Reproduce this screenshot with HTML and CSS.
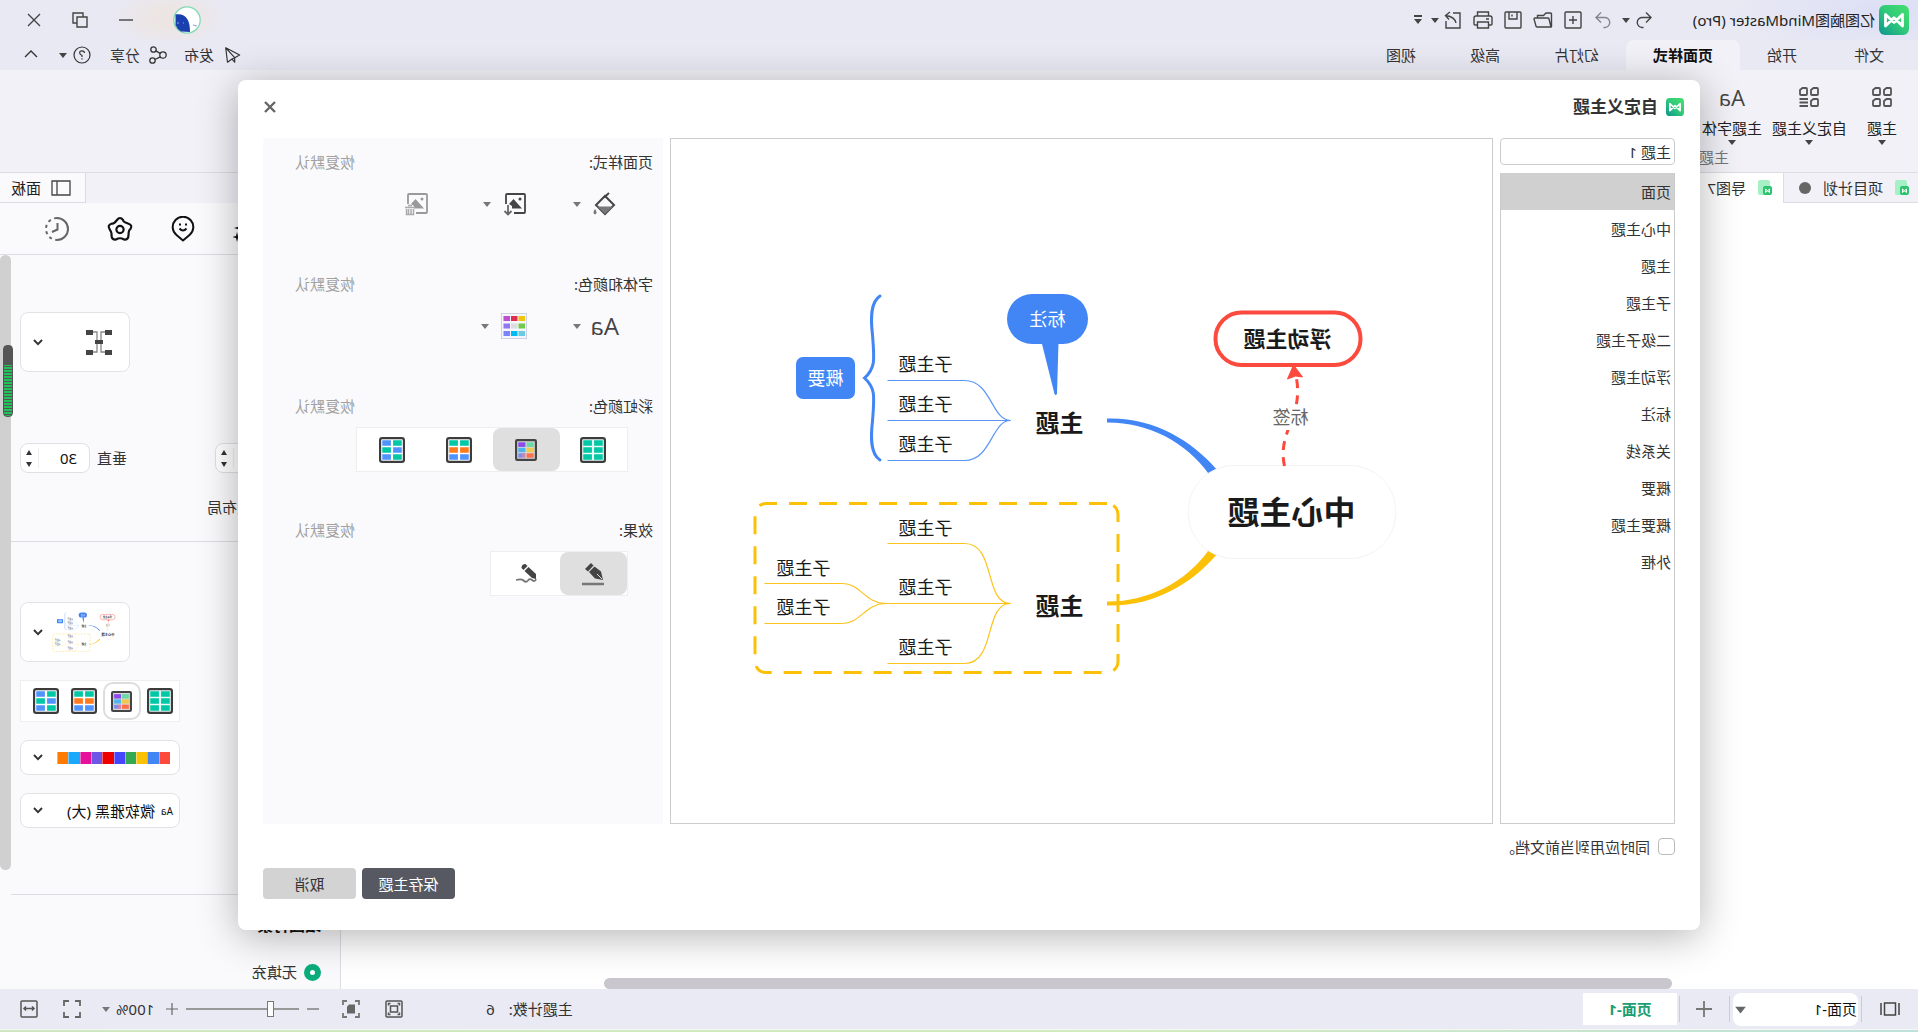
FILE: index.html
```html
<!DOCTYPE html>
<html lang="zh-CN">
<head>
<meta charset="utf-8">
<title>亿图脑图MindMaster (Pro)</title>
<link rel="stylesheet" href="styles.css">
</head>
<body>
<svg class="sprite" aria-hidden="true">
  <defs>
    <linearGradient id="logo-fill" x1="1" y1="0" x2="0" y2="1"><stop offset="0" stop-color="#46e070"/><stop offset=".5" stop-color="#2fc97a"/><stop offset="1" stop-color="#0d9490"/></linearGradient>
  </defs>
  <symbol id="logo" viewBox="0 0 30 30"><rect width="30" height="30" rx="6" fill="url(#logo-fill)" transform="matrix(-1 0 0 1 30 0)"/><path d="M6.500 21V9.500L15 17.500L23.500 9.500V21L15 12.800Z" fill="none" stroke="#fff" stroke-width="2.800" stroke-linejoin="round"/></symbol>
  <symbol id="doc" viewBox="0 0 14 16"><path d="M4 0H12a2 2 0 0 1 2 2V13a2 2 0 0 1-2 2H4a2 2 0 0 1-2-2V2A2 2 0 0 1 4 0Z" fill="#a5f0c4"/><rect x="0" y="6" width="9" height="9" rx="2" fill="#2cc36f"/><path d="M2.500 12.500V9L4.500 10.800L6.500 9V12.500L4.500 10.800Z" fill="none" stroke="#fff"/></symbol>
  <symbol id="caret" viewBox="0 0 8 5"><path d="M0 0H8L4 5Z" fill="currentColor"/></symbol>
  <symbol id="chev" viewBox="0 0 10 7"><path d="M1 1L5 5.200L9 1" fill="none" stroke="currentColor" stroke-width="1.900"/></symbol>
  <symbol id="grid-one" viewBox="0 0 24 24"><rect x="1" y="1" width="22" height="22" rx="2" fill="#eafaf6" stroke="#3c3c3c" stroke-width="2"/><path d="M3 3h8v5H3zM13 3h8v5h-8zM3 9.500h8v5H3zM13 9.500h8v5h-8zM3 16h8v5H3zM13 16h8v5h-8z" fill="#00c7a5"/></symbol>
  <symbol id="grid-rows" viewBox="0 0 24 24"><rect x="1" y="1" width="22" height="22" rx="2" fill="#fff" stroke="#3c3c3c" stroke-width="2"/><path d="M3 3h8v5H3zM13 3h8v5h-8z" fill="#00c7a5"/><path d="M3 9.500h8v5H3zM13 9.500h8v5h-8z" fill="#ff7a1c"/><path d="M3 16h8v5H3zM13 16h8v5h-8z" fill="#4f93ff"/></symbol>
  <symbol id="grid-mix" viewBox="0 0 24 24"><rect x="1" y="1" width="22" height="22" rx="2" fill="#fff" stroke="#3c3c3c" stroke-width="2"/><path d="M3 3h8v5H3zM13 9.500h8v5h-8zM3 16h8v5H3z" fill="#00c7a5"/><path d="M13 3h8v5h-8zM3 9.500h8v5H3zM13 16h8v5h-8z" fill="#4f93ff"/></symbol>
  <symbol id="grid-rainbow" viewBox="0 0 20 20"><rect x="1" y="1" width="18" height="18" rx="1" fill="#d8d8d8" stroke="#444" stroke-width="2"/><path d="M3 3h6.500v4.200H3z" fill="#6bd9a4"/><path d="M10.500 3H17v4.200h-6.500z" fill="#8b4bee"/><path d="M3 8h6.500v4H3z" fill="#efc94c"/><path d="M10.500 8H17v4h-6.500z" fill="#4db4ee"/><path d="M3 13h6.500v4H3z" fill="#ff7048"/><path d="M10.500 13H17v4h-3.500z" fill="#7a8df2"/><path d="M10.500 13h3v4h-3z" fill="#c987b0"/></symbol>
  <symbol id="bucket" viewBox="0 0 24 24"><path d="M3 13L12 4L21 13L12 22Z" fill="none" stroke="#444" stroke-width="2"/><path d="M4 14.500H20L12 22Z" fill="#777"/><path d="M8 1L13 5.500" stroke="#444" stroke-width="2"/><path d="M22 17q3 4 0 5.500q-3-1.500 0-5.500" fill="#777"/></symbol>
  <symbol id="image" viewBox="0 0 24 24"><path d="M13 21H3a1 1 0 0 1-1-1V3a1 1 0 0 1 1-1H20a1 1 0 0 1 1 1V12" fill="none" stroke="currentColor" stroke-width="1.800"/><path d="M5 16.500L13.500 7L18 12L15 14V16.500Z" fill="currentColor"/><circle cx="7" cy="7" r="1.500" fill="currentColor"/></symbol>
  <symbol id="plane" viewBox="0 0 20 20"><path d="M17 2L1.500 10L7 13L17 2L15 18L10 14.500L7 13V18L10 14.500" fill="none" stroke="currentColor" stroke-width="1.300" stroke-linejoin="round"/></symbol>
</svg>

<div class="app">
  <header class="titlebar">
    <svg class="logo" viewBox="0 0 30 30"><use href="#logo"/></svg>
    <span class="app-name">亿图脑图MindMaster (Pro)</span>
    <div class="quick">
      <button aria-label="重做"><svg width="20" height="20" viewBox="0 0 20 20"><path d="M8 2.500L3 7.500L8 12.500M3 7.500H11.500A5 5 0 0 1 12 17.500H10.500"/></svg></button>
      <svg class="dd" viewBox="0 0 8 5"><use href="#caret"/></svg>
      <button class="dim" aria-label="撤消"><svg width="20" height="20" viewBox="0 0 20 20"><path d="M12 2.500L17 7.500L12 12.500M17 7.500H8.500A5 5 0 0 0 8 17.500H9.500"/></svg></button>
      <button aria-label="新建"><svg width="20" height="20" viewBox="0 0 20 20"><rect x="2" y="2" width="16" height="16" rx="1"/><path d="M10 6V14M6 10H14"/></svg></button>
      <button aria-label="打开"><svg width="20" height="20" viewBox="0 0 20 20"><path d="M1.500 17V4a1 1 0 0 1 1-1H7L9.500 5.500H15.500V8M2 17L4 9a1 1 0 0 1 1-1H18a1 1 0 0 1 1 1L17 16a1 1 0 0 1-1 1Z"/></svg></button>
      <button aria-label="保存"><svg width="20" height="20" viewBox="0 0 20 20"><path d="M3 2H17a1 1 0 0 1 1 1V17a1 1 0 0 1-1 1H3a1 1 0 0 1-1-1V3a1 1 0 0 1 1-1ZM6 2V9H14V2M11 4.500V6.500"/></svg></button>
      <button aria-label="打印"><svg width="20" height="20" viewBox="0 0 20 20"><path d="M4.500 6V2H15.500V6M4.500 15H2a1 1 0 0 1-1-1V8a2 2 0 0 1 2-2H17a2 2 0 0 1 2 2V14a1 1 0 0 1-1 1H15.500M4.500 12H15.500V18H4.500ZM4 9H7"/></svg></button>
      <button aria-label="导出"><svg width="20" height="20" viewBox="0 0 20 20"><path d="M10 3H3V18H17V11M7 13Q8 7 17 5.500M13 2L17.500 5.500L14 9.500"/></svg></button>
      <svg class="dd" viewBox="0 0 8 5"><use href="#caret"/></svg>
      <svg class="more" width="8" height="10" viewBox="0 0 8 10"><path d="M0 0H8V2H0ZM0 4H8L4 9Z" fill="#444"/></svg>
    </div>
    <div class="window-tools">
      <svg class="avatar" viewBox="0 0 28 28"><circle cx="14" cy="14" r="13.200" fill="#fff" stroke="#7fd9b4" stroke-width="1.300"/><path d="M11 26C11 14 15 7 25.500 8.500V19A13 13 0 0 1 20 25.500Z" fill="#1a3fae"/><path d="M17 17h1M22 17h2M4 20l4-1" stroke="#8fa6e8" stroke-width="1.200"/></svg>
      <button aria-label="最小化"><svg width="16" height="16" viewBox="0 0 16 16"><path d="M1 8H15"/></svg></button>
      <button aria-label="还原"><svg width="16" height="16" viewBox="0 0 16 16"><path d="M1 5H11V15H1ZM5 5V1H15V11H11"/></svg></button>
      <button aria-label="关闭窗口"><svg width="16" height="16" viewBox="0 0 16 16"><path d="M2 2L14 14M14 2L2 14"/></svg></button>
    </div>
  </header>

  <nav class="menubar">
    <button>文件</button><button>开始</button><button class="on">页面样式</button><button>幻灯片</button><button>高级</button><button>视图</button>
    <div class="menu-right">
      <button><svg width="18" height="18" viewBox="0 0 20 20"><use href="#plane"/></svg>发布</button>
      <button><svg width="18" height="18" viewBox="0 0 18 18" fill="none" stroke="currentColor" stroke-width="1.300"><circle cx="4" cy="9" r="3.200"/><circle cx="13.500" cy="3.500" r="2.700"/><circle cx="14.500" cy="14.500" r="2.700"/><path d="M6.800 7.400L11.200 4.900M6.600 10.800L12.200 13.500"/></svg>分享</button>
      <button class="help" aria-label="帮助"><svg width="18" height="18" viewBox="0 0 18 18" fill="none" stroke="currentColor" stroke-width="1.200"><circle cx="9" cy="9" r="8"/><path d="M6.500 7Q6.500 4.800 9 4.800T11.300 7Q11.300 8.200 9 9.500V11M9 12.200V13.400"/></svg><svg class="dd" viewBox="0 0 8 5"><use href="#caret"/></svg></button>
      <button class="fold" aria-label="收起功能区"><svg width="14" height="8" viewBox="0 0 14 8" fill="none" stroke="currentColor" stroke-width="1.400"><path d="M1 7L7 1L13 7"/></svg></button>
    </div>
  </nav>

  <section class="ribbon">
    <div class="ribbon-tools">
      <button><svg width="20" height="20" viewBox="0 0 20 20"><path d="M1 2a1 1 0 0 1 1-1H5.500L8 3V7a1 1 0 0 1-1 1H2a1 1 0 0 1-1-1ZM12 2a1 1 0 0 1 1-1H16.500L19 3V7a1 1 0 0 1-1 1H13a1 1 0 0 1-1-1ZM1 13a1 1 0 0 1 1-1H5.500L8 14V18a1 1 0 0 1-1 1H2a1 1 0 0 1-1-1ZM12 13a1 1 0 0 1 1-1H16.500L19 14V18a1 1 0 0 1-1 1H13a1 1 0 0 1-1-1Z"/></svg>主题<svg class="dd" viewBox="0 0 8 5"><use href="#caret"/></svg></button>
      <button><svg width="20" height="20" viewBox="0 0 20 20"><path d="M1 2a1 1 0 0 1 1-1H5.500L8 3V7a1 1 0 0 1-1 1H2a1 1 0 0 1-1-1ZM12 2a1 1 0 0 1 1-1H16.500L19 3V7a1 1 0 0 1-1 1H13a1 1 0 0 1-1-1ZM1 13a1 1 0 0 1 1-1H5.500L8 14V18a1 1 0 0 1-1 1H2a1 1 0 0 1-1-1ZM11 12H19.500M11 15.500H19.500M11 19H19.500"/></svg>自定义主题<svg class="dd" viewBox="0 0 8 5"><use href="#caret"/></svg></button>
      <button><span class="aa">Aa</span>主题字体<svg class="dd" viewBox="0 0 8 5"><use href="#caret"/></svg></button>
    </div>
    <div class="ribbon-caption">主题样式</div>
  </section>

  <div class="doc-tabs">
    <button class="doc"><svg width="14" height="16" viewBox="0 0 14 16"><use href="#doc"/></svg>项目计划<i class="dot"></i></button>
    <button class="doc on"><svg width="14" height="16" viewBox="0 0 14 16"><use href="#doc"/></svg>导图7</button>
    <button class="panel-tab"><svg width="20" height="16" viewBox="0 0 20 16" fill="none" stroke="#444" stroke-width="1.300"><path d="M1 1H19V15H1ZM14 1V15"/></svg>面板</button>
  </div>

  <main class="work">
    <div class="canvas"><div class="hbar"></div></div>
    <aside class="panel">
      <div class="panel-tools">
        <button aria-label="智能"><svg width="26" height="26" viewBox="0 0 26 26"><path d="M12 3L15 9L25 12L15 15L12 22L9 15L1 13L9 10Z" fill="#111"/><path d="M23 18L24 22L28 23L24 24L23 28L22 24L18 23L22 22Z" transform="matrix(1 0 0 1 -1 -2)" fill="#111"/></svg></button>
        <button aria-label="图标"><svg width="26" height="26" viewBox="0 0 26 26" fill="none" stroke="#111" stroke-width="2"><path d="M13 24.500L6.500 19A10.300 10.300 0 1 1 19.500 19Z" stroke-linejoin="round"/><path d="M9.500 12.500Q13 16.500 16.500 12.500M10 7.500V9.500M16 7.500V9.500"/></svg></button>
        <button aria-label="剪贴画"><svg width="26" height="26" viewBox="0 0 26 26" fill="none" stroke="#111" stroke-width="2.200"><path d="M10 4Q13 0 16 4T21 7.500Q26 9 23.500 13T21.500 19Q21.500 24 17 23.500Q13 21 9 23.500Q4.500 24 4.500 19T2.500 13Q0 9 5 7.500T10 4Z" stroke-linejoin="round"/><circle cx="13" cy="13.500" r="3.600"/></svg></button>
        <button aria-label="历史"><svg width="26" height="26" viewBox="0 0 26 26" fill="none" stroke="#666" stroke-width="2"><path d="M13 2A11 11 0 1 0 13 24"/><path d="M13 2A11 11 0 0 1 13 24" stroke-dasharray="3 3.500"/><path d="M12.500 7V13.500L18 16"/></svg></button>
      </div>
      <div class="panel-body">
        <section class="sec sec-layout">
          <button class="card wide-pick" aria-label="布局方式"><svg width="26" height="26" viewBox="0 0 26 26"><path d="M6 3H11V23H6M20 3H15V23H20" fill="none" stroke="#888" stroke-width="1.300"/><path d="M0 1h7v5H0zM19 1h7v5h-7zM0 21h7v5H0zM19 21h7v5h-7zM9 11h8v4H9z" fill="#444"/></svg><svg class="chev" viewBox="0 0 10 7"><use href="#chev"/></svg></button>
          <div class="spins">
            <label for="sp-h">水平</label><span class="spin"><input id="sp-h" value="30"><span class="steps"><button aria-label="增加水平"></button><button class="down" aria-label="减少水平"></button></span></span>
            <label for="sp-v">垂直</label><span class="spin"><input id="sp-v" value="30"><span class="steps"><button aria-label="增加垂直"></button><button class="down" aria-label="减少垂直"></button></span></span>
          </div>
          <a class="reset" href="#layout">重置布局</a>
        </section>
        <section class="sec sec-theme">
          <button class="card wide-pick thumb" aria-label="主题"><svg width="72" height="42" viewBox="500 280 700 408"><use href="#map"/></svg><svg class="chev" viewBox="0 0 10 7"><use href="#chev"/></svg></button>
          <div class="mini-seg">
            <button aria-label="单色"><svg width="26" height="26"><use href="#grid-one"/></svg></button>
            <button class="on" aria-label="彩虹"><svg width="21" height="21"><use href="#grid-rainbow"/></svg></button>
            <button aria-label="按行"><svg width="26" height="26"><use href="#grid-rows"/></svg></button>
            <button aria-label="交错"><svg width="26" height="26"><use href="#grid-mix"/></svg></button>
          </div>
          <button class="card bar-pick" aria-label="主题颜色"><span class="swatches"><i class="c1"></i><i class="c2"></i><i class="c3"></i><i class="c4"></i><i class="c5"></i><i class="c6"></i><i class="c7"></i><i class="c8"></i><i class="c9"></i><i class="c10"></i></span><svg class="chev" viewBox="0 0 10 7"><use href="#chev"/></svg></button>
          <button class="card bar-pick font-pick"><small>Aa</small><span>微软雅黑 (大)</span><svg class="chev" viewBox="0 0 10 7"><use href="#chev"/></svg></button>
        </section>
        <section class="sec sec-fill">
          <h2>绘图背景</h2>
          <label><input type="radio" name="fill" checked>无填充</label>
        </section>
        <div class="vbar"></div>
        <div class="meter"></div>
      </div>
    </aside>
  </main>

  <footer class="status">
    <button class="pages" aria-label="页面视图"><svg width="20" height="14" viewBox="0 0 20 14" fill="none" stroke="#444" stroke-width="1.500"><path d="M1 1V13M19 1V13M4.500 1H15.500V13H4.500Z"/></svg></button>
    <span class="page-select"><select aria-label="当前页面"><option>页面-1</option></select><svg class="dd" viewBox="0 0 8 5"><use href="#caret"/></svg></span>
    <button class="add" aria-label="新建页面"><svg width="18" height="18" viewBox="0 0 18 18" stroke="#777" stroke-width="1.800"><path d="M9 1V17M1 9H17"/></svg></button>
    <button class="page-tab">页面-1</button>
    <div class="status-right">
      <span class="count">主题计数: <b>6</b></span>
      <button aria-label="适应页面"><svg width="18" height="18" viewBox="0 0 18 18" fill="none" stroke="#555" stroke-width="1.500"><rect x="1" y="1" width="16" height="16" rx="1"/><rect x="5.500" y="6" width="7" height="6"/><path d="M3.500 5.500V3.500H5.500M12.500 3.500H14.500V5.500M14.500 12.500V14.500H12.500M5.500 14.500H3.500V12.500"/></svg></button>
      <button aria-label="聚焦"><svg width="18" height="18" viewBox="0 0 18 18" fill="none" stroke="#777" stroke-width="1.800"><path d="M1 5V1H5M13 1H17V5M17 13V17H13M5 17H1V13"/><path d="M5 4.500H11L13 6.500V13.500H5Z" fill="#666" stroke="none"/></svg></button>
      <div class="zoom">
        <button aria-label="缩小"><svg width="12" height="12" viewBox="0 0 12 12" stroke="#666" stroke-width="1.200"><path d="M0 6H12"/></svg></button>
        <input type="range" min="0" max="100" value="24" aria-label="缩放">
        <button aria-label="放大"><svg width="12" height="12" viewBox="0 0 12 12" stroke="#666" stroke-width="1.200"><path d="M0 6H12M6 0V12"/></svg></button>
      </div>
      <button class="percent">100%<svg class="dd" viewBox="0 0 8 5"><use href="#caret"/></svg></button>
      <button aria-label="全屏"><svg width="18" height="18" viewBox="0 0 18 18" fill="none" stroke="#666" stroke-width="1.800"><path d="M1 6V1H6M12 1H17V6M17 12V17H12M6 17H1V12"/></svg></button>
      <button aria-label="适应宽度"><svg width="18" height="18" viewBox="0 0 18 18" fill="none" stroke="#555" stroke-width="1.500"><rect x="1" y="1" width="16" height="16" rx="1"/><path d="M4 8.500H14M6 6.500L4 8.500L6 10.500M12 6.500L14 8.500L12 10.500"/></svg></button>
    </div>
  </footer>
  <div class="edge"></div>

  <div class="overlay">
    <div class="dialog" role="dialog" aria-labelledby="dlg-title">
      <header class="dlg-head"><svg width="18" height="18" viewBox="0 0 30 30"><use href="#logo"/></svg><h1 id="dlg-title">自定义主题</h1><button aria-label="关闭"><svg width="12" height="12" viewBox="0 0 12 12" stroke="#666" stroke-width="2.400"><path d="M1 1L11 11M11 1L1 11"/></svg></button></header>
      <div class="dlg-body">
        <div class="dlg-left">
          <input class="name" aria-label="主题名称" value="主题 1">
          <ul class="parts">
            <li><button class="on">页面</button></li><li><button>中心主题</button></li><li><button>主题</button></li><li><button>子主题</button></li><li><button>二级子主题</button></li><li><button>浮动主题</button></li><li><button>标注</button></li><li><button>关系线</button></li><li><button>概要</button></li><li><button>概要主题</button></li><li><button>外框</button></li>
          </ul>
        </div>
        <div class="preview">
          <svg viewBox="427 139 820 684">
            <g id="map">
              <path d="M811.500 418.500C766 417 727 440 702 469.300L709.700 474C733 441 772 422 811.500 422.500Z" fill="#4285f4"/>
              <path d="M811.500 605.500C766 607 727 584 702 554.700L709.700 550C733 583 772 602 811.500 601.500Z" fill="#fbc108"/>
              <rect x="522.500" y="465.500" width="208" height="93" rx="46" fill="#fff" stroke="#f4f4f5"/>
              <rect x="558" y="312.500" width="145" height="52.500" rx="26" fill="#fff" stroke="#fc4b3e" stroke-width="4"/>
              <path d="M634 466C642 430 612 415 623.500 372" fill="none" stroke="#fc4b3e" stroke-width="3" stroke-dasharray="9 7"/>
              <path d="M625 365L616 377L623 376L631 379Z" fill="#fc4b3e" stroke="#fc4b3e"/>
              <rect x="608" y="406" width="40" height="24" fill="#fff"/>
              <rect x="830.500" y="294" width="81" height="50" rx="25" fill="#4285f4"/>
              <path d="M860 342H877L864 394Q863 396 861.500 394Z" fill="#4285f4"/>
              <rect x="1063.500" y="357" width="59" height="42" rx="7" fill="#4285f4"/>
              <path d="M1038.500 296C1048 302 1048 318 1046 335C1044 360 1043 368 1054 378C1043 388 1044 396 1046 421C1048 438 1048 454 1038.500 460" fill="none" stroke="#4285f4" stroke-width="3" stroke-linecap="round"/>
              <g fill="none" stroke="#5c96f5" stroke-width="1.200">
                <path d="M908 420.500H1031"/><path d="M908 420.500C927 420.500 927 380.500 954 380.500H1031"/><path d="M908 420.500C927 420.500 927 460.500 954 460.500H1031"/>
              </g>
              <g fill="none" stroke="#fbc31c" stroke-width="1.200">
                <path d="M908 603.500H1036"/><path d="M908 603.500C935 603.500 922 543.500 954 543.500H1031"/><path d="M908 603.500C935 603.500 922 663.500 954 663.500H1031"/>
                <path d="M1033 603.500C1053 603.500 1058 583.500 1076 583.500H1154"/><path d="M1033 603.500C1053 603.500 1058 623.500 1076 623.500H1154"/>
              </g>
              <rect x="800.500" y="503.500" width="363" height="169" rx="11" fill="none" stroke="#fbc108" stroke-width="3" stroke-dasharray="18 12"/>
              <g class="map-text">
                <text class="t-center" x="627" y="524">中心主题</text>
                <text class="t-float" x="631" y="347">浮动主题</text>
                <text class="t-tag" x="628" y="424">标签</text>
                <text class="t-on" x="871" y="326">标注</text>
                <text class="t-on" x="1093" y="385">概要</text>
                <text class="t-main" x="859" y="432">主题</text>
                <text class="t-main" x="859" y="615">主题</text>
                <text x="993" y="371">子主题</text><text x="993" y="411">子主题</text><text x="993" y="451">子主题</text>
                <text x="993" y="535">子主题</text><text x="993" y="594">子主题</text><text x="993" y="654">子主题</text>
                <text x="1115" y="575">子主题</text><text x="1115" y="614">子主题</text>
              </g>
            </g>
          </svg>
        </div>
        <div class="form">
          <section>
            <div class="form-head"><span>页面样式:</span><a href="#page">恢复默认</a></div>
            <div class="tools">
              <button aria-label="填充颜色"><svg width="24" height="24"><use href="#bucket"/></svg><svg class="dd" viewBox="0 0 8 5"><use href="#caret"/></svg></button>
              <button aria-label="背景图片"><svg width="24" height="24" viewBox="0 0 24 24"><use href="#image"/><path d="M19 13V22M15.500 19L19 22.500L22.500 19" fill="none" stroke="#666" stroke-width="1.800"/></svg><svg class="dd" viewBox="0 0 8 5"><use href="#caret"/></svg></button>
              <button class="off" aria-label="删除图片"><svg width="24" height="24" viewBox="0 0 24 24"><use href="#image"/><path d="M14 15.500H24M17 13.500H21M15.500 17V22.500H22.500V17M18 17V22M20.500 17V22" fill="none" stroke="#aaa" stroke-width="1.500"/></svg></button>
            </div>
          </section>
          <section>
            <div class="form-head"><span>字体和颜色:</span><a href="#font">恢复默认</a></div>
            <div class="tools">
              <button aria-label="字体"><span class="aa">Aa</span><svg class="dd" viewBox="0 0 8 5"><use href="#caret"/></svg></button>
              <button aria-label="颜色"><svg width="26" height="26" viewBox="0 0 26 26"><rect x=".5" y=".5" width="25" height="25" fill="#f4f6fc" stroke="#cdd3e4"/><path d="M2 3h6.500v5H2z" fill="#f1c40f"/><path d="M9.500 3H16v5H9.500z" fill="#e02c50"/><path d="M17 3h6.500v5H17z" fill="#c04fcf"/><path d="M2 10.500h6.500v5H2z" fill="#74cb4a"/><path d="M9.500 10.500H16v5H9.500z" fill="#ddd"/><path d="M17 10.500h6.500v5H17z" fill="#8f78f0"/><path d="M2 18h6.500v5H2z" fill="#6ccbe0"/><path d="M9.500 18H16v5H9.500z" fill="#00bcf5"/><path d="M17 18h6.500v5H17z" fill="#7b85ff"/></svg><svg class="dd" viewBox="0 0 8 5"><use href="#caret"/></svg></button>
            </div>
          </section>
          <section>
            <div class="form-head"><span>彩虹颜色:</span><a href="#rainbow">恢复默认</a></div>
            <div class="seg">
              <button aria-label="单色"><svg width="26" height="26"><use href="#grid-one"/></svg></button>
              <button class="on" aria-label="彩虹"><svg width="22" height="22"><use href="#grid-rainbow"/></svg></button>
              <button aria-label="按行"><svg width="26" height="26"><use href="#grid-rows"/></svg></button>
              <button aria-label="交错"><svg width="26" height="26"><use href="#grid-mix"/></svg></button>
            </div>
          </section>
          <section>
            <div class="form-head"><span>效果:</span><a href="#effect">恢复默认</a></div>
            <div class="seg">
              <button class="on" aria-label="普通"><svg width="24" height="24" viewBox="0 0 24 24"><path d="M2 18L4 9.500L10.500 4.500L16 10L10 16.500Z" fill="#444"/><path d="M11.500 3.500L14 1L20 7L17 9.500Z" fill="#444"/><path d="M3 17L8 12" stroke="#e0e0e0"/><path d="M1 22H23" stroke="#777" stroke-width="2.500"/></svg></button>
              <button aria-label="手绘"><svg width="22" height="22" viewBox="0 0 22 22"><path d="M1 16V11L8.500 4L12.500 8L5 15Z" fill="#444"/><path d="M9.500 3L11.500 1Q15.500 1 15.500 5L13.500 7Z" fill="#444"/><path d="M1 16Q2 19.500 5 17Q7.500 15 9 17.500Q11 20 13.500 17.500Q15.500 15.500 21 17" fill="none" stroke="#777" stroke-width="1.800"/></svg></button>
            </div>
          </section>
        </div>
      </div>
      <footer class="dlg-foot">
        <label><input type="checkbox">同时应用到当前文档。</label>
        <div class="actions"><button class="save">保存主题</button><button class="cancel">取消</button></div>
      </footer>
    </div>
  </div>
</div>
</body>
</html>
```

FILE: styles.css
```css
* { box-sizing: border-box; }
body {
  margin: 0;
  overflow: hidden;
  font: 15px/20px "Noto Sans", "Noto Sans CJK SC", sans-serif;
  color: #333;
}
h1, h2, ul { margin: 0; padding: 0; list-style: none; }
button, input, select { font: inherit; color: inherit; border: 0; background: none; padding: 0; margin: 0; }
button { display: flex; align-items: center; justify-content: center; white-space: nowrap; }
a { color: inherit; text-decoration: none; }
svg { display: block; flex: none; }
.sprite { position: absolute; width: 0; height: 0; }
.dd { width: 8px; height: 5px; color: #444; }
.chev { width: 10px; height: 7px; color: #333; }

/* the whole interface is flipped left to right */
.app {
  position: relative;
  display: flex;
  flex-direction: column;
  height: 100vh;
  transform: scaleX(-1);
  background: #f2f1f7;
}

/* title bar */
.titlebar {
  display: flex;
  align-items: center;
  height: 40px;
  padding: 0 26px 0 9px;
  background:
    radial-gradient(ellipse 60px 30px at 1748px 18px, #ece5e3 30%, transparent),
    radial-gradient(ellipse 160px 50px at 30px 10px, #dcdff5, transparent),
    #e9e9f4;
}
.logo { width: 30px; height: 30px; margin-right: 4px; }
.app-name { color: #222; }
.quick { display: flex; align-items: center; gap: 10px; margin-left: 39px; }
.quick button svg, .window-tools button svg { fill: none; stroke: #444; stroke-width: 1.4; }
.quick .dd { margin: 0 -1px 0 -6px; }
.quick .dim { opacity: .6; }
.window-tools { display: flex; align-items: center; gap: 30px; margin-left: auto; }
.avatar { width: 28px; height: 28px; margin-right: 9px; }

/* menu bar */
.menubar { display: flex; height: 30px; padding: 0 24px 0 7px; background: #e9e9f4; }
.menubar > button { padding: 0 27px; }
.menubar > button:first-child { margin-right: 3px; }
.menubar > .on { background: #f2f1f7; border-radius: 8px 8px 0 0; font-weight: bold; color: #111; }
.menu-right { display: flex; gap: 17px; margin-left: auto; }
.menu-right button { gap: 9px; }
.menu-right .help { gap: 6px; margin-left: 2px; }
.menu-right .fold { padding: 0 0 2px 4px; }

/* ribbon */
.ribbon { height: 102px; padding-top: 17px; }
.ribbon-tools { display: flex; gap: 10px; padding-left: 21px; }
.ribbon-tools button { flex-direction: column; height: 58px; color: #222; justify-content: flex-start; }
.ribbon-tools button:first-child { margin-right: 10px; }
.ribbon-tools button > svg:first-child { fill: none; stroke: #555; stroke-width: 1.8; }
.ribbon-tools button > svg:first-child, .ribbon-tools .aa { margin-bottom: 11px; }
.ribbon-tools .dd { margin-top: 2px; }
.aa { font: 22px/20px "Open Sans", sans-serif; color: #444; }
.ribbon-caption { padding: 2px 0 0 189px; color: #777; }

/* document tabs */
.doc-tabs { display: flex; height: 31px; border-top: 1px solid #dcdce3; }
.doc { padding: 0 15px 0 9px; gap: 12px; border-right: 1px solid #dcdce3; border-bottom: 1px solid #dcdce3; }
.doc.on { background: #fff; border-color: #fff; padding-left: 11px; }
.dot { width: 12px; height: 12px; border-radius: 50%; background: #666; }
.panel-tab { margin-left: auto; padding: 0 11px 0 14px; gap: 10px; background: #fafafc; border-left: 1px solid #dcdce3; border-bottom: 1px solid #dcdce3; color: #222; }

/* work area */
.work { flex: 1; display: flex; min-height: 0; }
.canvas { flex: 1; display: flex; align-items: flex-end; padding: 0 263px 0 246px; background: #fff; }
.hbar { flex: 1; height: 11px; border-radius: 6px; background: #c9c7cd; }
.panel { display: flex; flex-direction: column; width: 341px; background: #fafafc; border-left: 1px solid #dcdce3; }
.panel-tools { display: flex; justify-content: flex-end; gap: 37px; height: 52px; padding-right: 44px; border-bottom: 1px solid #dcdce3; }
.panel-body { position: relative; flex: 1; min-height: 0; overflow: hidden; }
.sec { display: flex; flex-direction: column; align-items: flex-end; margin-right: 11px; padding-right: 9px; border-bottom: 1px solid #dcdce0; }
.sec-layout { padding-top: 57px; height: 287px; }
.sec-theme { padding-top: 60px; height: 353px; gap: 18px; }
.sec-fill { align-items: flex-start; padding: 20px 0 0 19px; border: 0; gap: 27px; }
.sec-fill h2 { font-size: 16px; line-height: 20px; color: #111; }
.sec-fill label { display: flex; align-items: center; gap: 7px; }
.sec-fill input { appearance: none; width: 17px; height: 17px; border-radius: 50%; border: 6px solid #0aad7c; background: #fff; }
.card { border: 1px solid #e3e3e6; border-radius: 8px; background: #fff; justify-content: space-between; padding-right: 12px; }
.wide-pick { width: 110px; height: 60px; padding-left: 17px; }
.thumb { padding-left: 8px; }
.spins { display: flex; align-items: center; gap: 7px; margin-top: 71px; }
.spin { display: flex; align-items: center; width: 70px; height: 30px; border: 1px solid #e0e0e3; border-radius: 8px; background: #fff; color: #111; }
.spin + label { margin-left: 81px; }
.spin input { width: 50px; min-width: 0; padding-left: 12px; }
.steps { display: flex; flex: none; flex-direction: column; gap: 7px; width: 18px; height: 20px; align-items: flex-start; justify-content: center; padding-left: 6px; border-left: 1px solid #eee; }
.steps button { border: 3px solid transparent; border-top: 0; border-bottom: 5px solid #333; }
.steps .down { border-bottom: 0; border-top: 5px solid #333; }
.reset { margin: 24px 187px 0 0; }
.mini-seg { display: flex; align-items: center; width: 160px; height: 42px; border: 1px solid #eee; background: #fff; }
.mini-seg button { width: 38px; height: 38px; }
.mini-seg .on { border: 2px solid #ddd; border-radius: 10px; }
.bar-pick { width: 160px; height: 35px; padding-left: 9px; }
.swatches { display: flex; width: 113px; height: 12px; }
.swatches i { flex: 1; border-right: 1px solid #fff6; }
.c1 { background: #fe4a3b; } .c2 { background: #4285f4; } .c3 { background: #fbc105; } .c4 { background: #34a853; } .c5 { background: #4646ff; }
.c6 { background: #e00; } .c7 { background: #6e57e5; } .c8 { background: #e6119b; } .c9 { background: #1ba8fa; } .c10 { background: #ff7a00; }
.font-pick { padding-left: 6px; justify-content: flex-start; gap: 6px; color: #111; }
.font-pick small { font-size: 10px; }
.font-pick .chev { margin-left: auto; }
.vbar { position: absolute; top: 0; right: 0; width: 11px; height: 615px; border-radius: 6px; background: #d0d0d0; }
.meter { position: absolute; top: 90px; right: 3px; width: 10px; height: 72px; border: 1px solid #555; border-radius: 4px; background: linear-gradient(#555 19px, transparent 19px), repeating-linear-gradient(#1fc45a 0 2px, #555 2px 3px); }

/* status bar */
.status { display: flex; align-items: center; height: 40px; padding-right: 20px; background: #eaeaf5; }
.pages { width: 57px; height: 26px; border-right: 1px solid #ccc; }
.page-select { position: relative; width: 125px; margin: 0 3px; }
.page-select select { appearance: none; width: 100%; height: 33px; padding: 0 1px; border-radius: 8px; background: #fff; color: #111; }
.page-select .dd { position: absolute; right: 2px; top: 13px; width: 11px; height: 8px; color: #666; }
.add { width: 51px; height: 26px; border: solid #ccc; border-width: 0 1px; }
.page-tab { width: 94px; height: 32px; margin-left: 2px; background: #fff; color: #1a9e72; font-weight: bold; }
.status-right { display: flex; align-items: center; gap: 25px; margin-left: auto; }
.count { margin-right: 58px; }
.count b { margin-left: 10px; font-weight: normal; }
.zoom { display: flex; align-items: center; gap: 8px; margin: 0 -13px 0 -2px; }
.zoom input { appearance: none; width: 113px; height: 16px; background: linear-gradient(#999, #999) 0 7px / 100% 2px no-repeat; }
.zoom input::-webkit-slider-thumb { appearance: none; width: 7px; height: 16px; border: 1px solid #777; background: #fff; }
.percent { gap: 6px; margin-right: -4px; }
.percent .dd { color: #777; }
.edge { height: 3px; background: linear-gradient(90deg, #bfe0dc, #d3ebc0 40%, #cfe6c0); border-top: 1px solid #f6f8f4; }

/* dialog */
.overlay { position: absolute; inset: 0; display: flex; padding: 80px 238px 102px 218px; }
.dialog { flex: 1; display: flex; flex-direction: column; padding: 0 25px 31px; border-radius: 8px; background: #fff; box-shadow: 0 6px 40px #0000004d; }
.dlg-head { display: flex; align-items: center; height: 58px; margin-left: -9px; gap: 8px; padding: 0 1px 5px 0; }
.dlg-head h1 { font-size: 17px; line-height: 20px; }
.dlg-head button { margin-left: auto; }
.dlg-body { flex: 1; display: flex; gap: 7px; min-height: 0; }
.dlg-left { display: flex; flex-direction: column; gap: 8px; width: 175px; }
.name { height: 27px; padding: 0 3px; border: 1px solid #ccc; border-radius: 4px; }
.parts { flex: 1; border: 1px solid #ccc; border-top: 0; }
.parts button { width: 100%; height: 37px; padding-left: 3px; justify-content: flex-start; }
.parts .on { background: #d0d0d0; }
.preview { flex: 1; display: flex; border: 1px solid #ccc; }
.preview svg { flex: 1; width: 100%; height: 100%; }
.map-text { font-size: 18px; text-anchor: middle; fill: #1a1a1a; }
.t-center { font-size: 32px; font-weight: bold; }
.t-float { font-size: 22px; font-weight: bold; }
.t-main { font-size: 24px; font-weight: bold; }
.t-tag { fill: #666; }
.t-on { fill: #fff; }
.form { width: 400px; padding-top: 14px; background: #fafafc; }
.form section { min-height: 122px; }
.form section:nth-child(3) { min-height: 124px; }
.form-head { display: flex; justify-content: space-between; padding: 0 32px 0 10px; }
.form-head a { color: #a0a0a0; }
.tools { display: grid; grid-template-columns: 90px 98px 24px; padding: 20px 0 0 46px; }
.tools button { justify-content: flex-start; gap: 12px; color: #444; height: 24px; }
.tools .dd { color: #777; }
.tools .off { color: #999; }
.tools .aa { width: 26px; margin-left: -2px; font-size: 24px; font-weight: 500; }
.seg { display: flex; width: fit-content; margin: 11px 0 0 35px; padding-right: 2px; border: 1px solid #eee; background: #fff; }
.seg button { width: 67px; height: 43px; border-radius: 8px; }
.seg .on { background: #dfdfdf; }
.dlg-foot { padding-top: 14px; }
.dlg-foot label { display: flex; align-items: center; gap: 8px; height: 17px; width: fit-content; }
.dlg-foot input { appearance: none; width: 17px; height: 17px; border: 1px solid #bbb; border-radius: 4px; background: #fff; }
.actions { display: flex; justify-content: flex-end; gap: 6px; margin-top: 13px; }
.actions button { width: 93px; height: 31px; border-radius: 4px; }
.save { background: #575962; color: #fff; }
.cancel { background: #d3d3d3; }
```
